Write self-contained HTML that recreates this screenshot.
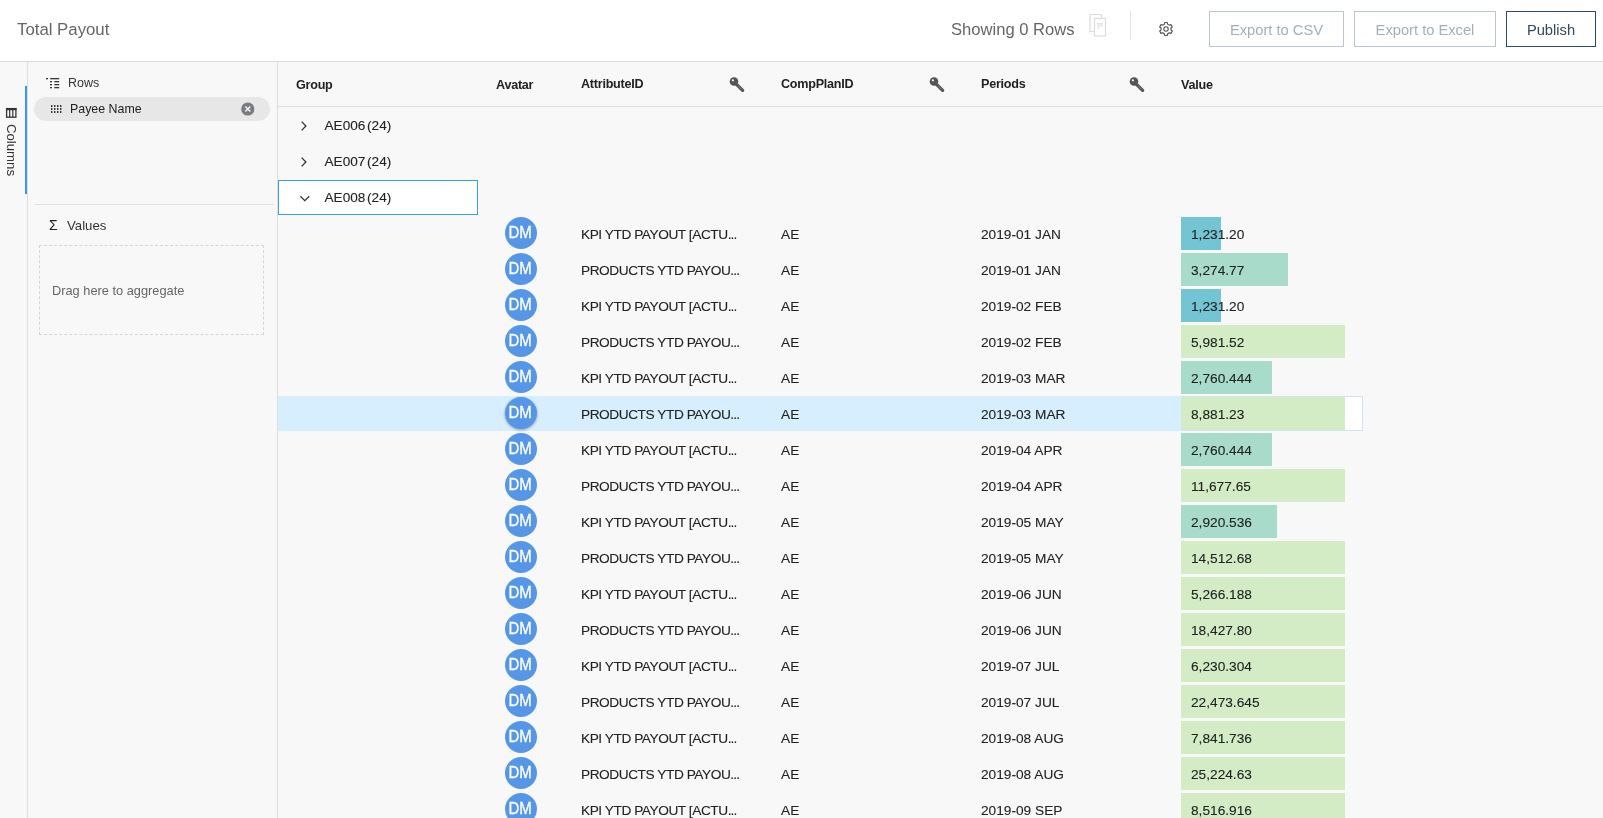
<!DOCTYPE html>
<html><head><meta charset="utf-8">
<style>
*{box-sizing:border-box;margin:0;padding:0}
html,body{width:1603px;height:818px;overflow:hidden;background:#fff;font-family:"Liberation Sans",sans-serif;color:#222}
.cell,.val,.gtext{-webkit-text-stroke:0.1px currentColor}
.abs{position:absolute}
#top{position:absolute;left:0;top:0;width:1603px;height:62px;background:#fff;border-bottom:1px solid #dcdcdc}
#title{left:17px;top:20px;font-size:16.8px;color:#666;white-space:nowrap}
#showing{left:951px;top:20px;font-size:16.6px;color:#666;white-space:nowrap}
.btn{position:absolute;top:11px;height:36px;border:1px solid #b9c6d2;color:#a3afbb;font-size:14.7px;text-align:center;line-height:34px;padding-top:1px;background:#fff;white-space:nowrap}
#strip{left:0;top:62px;width:28px;height:756px;background:#f8f8f8;border-right:1px solid #dedede}
#panel{left:28px;top:62px;width:250px;height:756px;background:#f8f8f8;border-right:1px solid #dedede}
#grid{left:278px;top:62px;width:1325px;height:756px;background:#f8f8f8;overflow:hidden}
#ghead{left:0;top:0;width:1325px;height:45px;border-bottom:1px solid #dedede}
.hl{position:absolute;font-size:12.6px;font-weight:bold;color:#222;white-space:nowrap;letter-spacing:-0.25px}
.key{position:absolute;top:14px}
.grow{position:absolute;left:0;width:1085px;height:36px}
.gtext{position:absolute;left:46.5px;top:0;line-height:36px;font-size:13.6px;word-spacing:-2px;white-space:nowrap;padding-top:1px}
.chev{position:absolute}
.focus{position:absolute;border:1px solid #3d9bf0;background:#fff}
.row{position:absolute;left:0;width:1085px;height:36px}
.row.sel::before{content:"";position:absolute;left:0;top:1px;width:903px;height:35px;background:#d7eefe}
.vfocus{position:absolute;left:903px;top:1px;width:182px;height:35px;border:1px solid #cfe3f7;border-left:0;background:#fff}
.cell{position:absolute;top:0;height:36px;font-size:13.7px;line-height:36px;white-space:nowrap;color:#222;padding-top:2px}
.cell.at{letter-spacing:-0.45px}
.el{letter-spacing:-0.9px}
.av{position:absolute;left:227px;top:2px;width:32px;height:32px;border-radius:50%;background:#5596e6;color:#fff;font-size:16px;text-align:center;line-height:32px}
.av b{display:inline-block;font-weight:normal;font-size:15.6px;position:relative;left:-0.5px;top:0px;transform:scaleX(0.96);-webkit-text-stroke:0.3px #fff}
.sel .av{box-shadow:0 1px 3px rgba(0,0,0,.35)}
.bar{position:absolute;left:903px;top:2px;height:33px}
.val{position:absolute;left:913px;top:0;height:36px;line-height:36px;font-size:13.7px;color:#222;padding-top:2px}
</style></head>
<body><div id="wrap" style="position:absolute;left:0;top:0;width:1603px;height:818px;will-change:transform">
<div id="top">
  <div id="title" class="abs">Total Payout</div>
  <div id="showing" class="abs">Showing 0 Rows</div>
  <svg class="abs" style="left:1088px;top:12px" width="20" height="26" viewBox="0 0 20 26">
    <path d="M2 2.5 h11.5 v4" fill="none" stroke="#dcdcdc" stroke-width="1.2"/>
    <path d="M2 2.5 v17 h4.5" fill="none" stroke="#dcdcdc" stroke-width="1.2"/>
    <rect x="6.5" y="6.5" width="11" height="17.5" fill="#fff" stroke="#dcdcdc" stroke-width="1.2"/>
    <rect x="9" y="11" width="6" height="1.6" fill="#e2e2e2"/>
    <rect x="9" y="13.2" width="6" height="1.2" fill="#e2e2e2"/>
    <rect x="9" y="15.2" width="2.5" height="1.2" fill="#e2e2e2"/>
  </svg>
  <div class="abs" style="left:1130px;top:11px;width:1px;height:29px;background:#e3e3e3"></div>
  <svg class="abs" style="left:1158px;top:21px" width="16" height="16" viewBox="0 0 24 24">
    <circle cx="12" cy="12" r="3.3" fill="none" stroke="#555" stroke-width="1.7"/>
    <path fill="none" stroke="#555" stroke-width="1.7" stroke-linejoin="round" d="M19.4 13.5c.05-.5.1-1 .1-1.5s-.05-1-.1-1.5l2.1-1.6-2-3.5-2.5 1a7.6 7.6 0 0 0-2.6-1.5L14 2.3h-4l-.4 2.6a7.6 7.6 0 0 0-2.6 1.5l-2.5-1-2 3.5 2.1 1.6c-.05.5-.1 1-.1 1.5s.05 1 .1 1.5l-2.1 1.6 2 3.5 2.5-1a7.6 7.6 0 0 0 2.6 1.5l.4 2.6h4l.4-2.6a7.6 7.6 0 0 0 2.6-1.5l2.5 1 2-3.5z"/>
  </svg>
  <div class="btn" style="left:1209px;width:135px">Export to CSV</div>
  <div class="btn" style="left:1354px;width:142px">Export to Excel</div>
  <div class="btn" style="left:1506px;width:90px;border-color:#2f4a63;color:#2f4a63;border-width:1.5px">Publish</div>
</div>
<div id="strip" class="abs">
  <div class="abs" style="left:25px;top:24px;width:2px;height:108px;background:#3d96ec"></div>
  <svg class="abs" style="left:5px;top:45px" width="13" height="12" viewBox="0 0 13 12"><rect x="1.6" y="1.6" width="9.3" height="8.6" fill="none" stroke="#333" stroke-width="1.3"/><rect x="1" y="1" width="10.5" height="2.2" fill="#333"/><path d="M4.7 2 v8 M7.8 2 v8" stroke="#333" stroke-width="1.2"/></svg>
  <div class="abs" style="left:18.5px;top:62px;transform:rotate(90deg);transform-origin:0 0;font-size:13.2px;color:#333;white-space:nowrap;line-height:15px">Columns</div>
</div>
<div id="panel" class="abs">
  <svg class="abs" style="left:17px;top:14px" width="16" height="14" viewBox="0 0 16 14"><g fill="#333"><rect x="1" y="2" width="2" height="1.3"/><rect x="5.2" y="2" width="9" height="1.3"/><rect x="5" y="5" width="2" height="1.3"/><rect x="9.3" y="5" width="4.9" height="1.3"/><rect x="5" y="8" width="2" height="1.3"/><rect x="9.3" y="8" width="4.9" height="1.3"/><rect x="5" y="11" width="2" height="1.3"/><rect x="9.3" y="11" width="4.9" height="1.3"/></g></svg>
  <div class="abs" style="left:40px;top:14px;font-size:12.5px;color:#333">Rows</div>
  <div class="abs" style="left:6px;top:35px;width:236px;height:24px;border-radius:12px;background:#e7e7e7"></div>
  <svg class="abs" style="left:22px;top:42px" width="13" height="10" viewBox="0 0 13 10"><g fill="#333"><rect x="1" y="1" width="1.4" height="2"/><rect x="4" y="1" width="1.4" height="2"/><rect x="7" y="1" width="1.4" height="2"/><rect x="10" y="1" width="1.4" height="2"/><rect x="1" y="4" width="1.4" height="2"/><rect x="4" y="4" width="1.4" height="2"/><rect x="7" y="4" width="1.4" height="2"/><rect x="10" y="4" width="1.4" height="2"/><rect x="1" y="7" width="1.4" height="2"/><rect x="4" y="7" width="1.4" height="2"/><rect x="7" y="7" width="1.4" height="2"/><rect x="10" y="7" width="1.4" height="2"/></g></svg>
  <div class="abs" style="left:42px;top:40px;font-size:12.4px;color:#222;white-space:nowrap">Payee Name</div>
  <svg class="abs" style="left:213px;top:40px" width="14" height="14" viewBox="0 0 14 14"><circle cx="6.8" cy="7" r="6.6" fill="#797c7f"/><path d="M4.3 4.5 L9.3 9.5 M9.3 4.5 L4.3 9.5" stroke="#f2f2f2" stroke-width="1.6"/></svg>
  <div class="abs" style="left:6px;top:142px;width:240px;height:1px;background:#d9e2ea"></div>
  <div class="abs" style="left:21px;top:155px;font-size:14px;color:#222">&Sigma;</div>
  <div class="abs" style="left:39px;top:156px;font-size:13.2px;color:#333">Values</div>
  <div class="abs" style="left:11px;top:183px;width:225px;height:90px;border:1px dashed #d6d6d6"></div>
  <div class="abs" style="left:24px;top:221px;font-size:12.8px;color:#666;white-space:nowrap">Drag here to aggregate</div>
</div>
<div id="grid" class="abs">
  <div id="ghead" class="abs">
    <div class="hl" style="left:18px;top:16px">Group</div>
    <div class="hl" style="left:218px;top:16px">Avatar</div>
    <div class="hl" style="left:303px;top:15px">AttributeID</div>
    <svg class="key" style="left:450px" width="18" height="18" viewBox="0 0 18 18"><circle cx="6" cy="5.5" r="4.3" fill="#555"/><circle cx="4.9" cy="4.3" r="1.1" fill="#f8f8f8"/><path d="M8 7.8 L14.6 14.4" stroke="#555" stroke-width="3.3" stroke-linecap="round"/><path d="M10.4 10.2 L13.9 13.7" stroke="#8a8a8a" stroke-width="0.8"/></svg>
    <div class="hl" style="left:503px;top:15px">CompPlanID</div>
    <svg class="key" style="left:650px" width="18" height="18" viewBox="0 0 18 18"><circle cx="6" cy="5.5" r="4.3" fill="#555"/><circle cx="4.9" cy="4.3" r="1.1" fill="#f8f8f8"/><path d="M8 7.8 L14.6 14.4" stroke="#555" stroke-width="3.3" stroke-linecap="round"/><path d="M10.4 10.2 L13.9 13.7" stroke="#8a8a8a" stroke-width="0.8"/></svg>
    <div class="hl" style="left:703px;top:15px">Periods</div>
    <svg class="key" style="left:850px" width="18" height="18" viewBox="0 0 18 18"><circle cx="6" cy="5.5" r="4.3" fill="#555"/><circle cx="4.9" cy="4.3" r="1.1" fill="#f8f8f8"/><path d="M8 7.8 L14.6 14.4" stroke="#555" stroke-width="3.3" stroke-linecap="round"/><path d="M10.4 10.2 L13.9 13.7" stroke="#8a8a8a" stroke-width="0.8"/></svg>
    <div class="hl" style="left:903px;top:16px">Value</div>
  </div>
<div class="grow" style="top:45px"><svg class="chev" width="10" height="12" viewBox="0 0 10 12" style="left:21px;top:12.5px"><path d="M2.6 1.6 L6.9 6 L2.6 10.4" fill="none" stroke="#333" stroke-width="1.3"/></svg><div class="gtext">AE006 (24)</div></div>
<div class="grow" style="top:81px"><svg class="chev" width="10" height="12" viewBox="0 0 10 12" style="left:21px;top:12.5px"><path d="M2.6 1.6 L6.9 6 L2.6 10.4" fill="none" stroke="#333" stroke-width="1.3"/></svg><div class="gtext">AE007 (24)</div></div>
<div class="grow" style="top:117px"><div class="focus" style="left:0;top:1px;width:200px;height:35px"></div><svg class="chev" width="12" height="10" viewBox="0 0 12 10" style="left:20.5px;top:14.5px"><path d="M1.4 2.2 L5.8 6.6 L10.2 2.2" fill="none" stroke="#333" stroke-width="1.3"/></svg><div class="gtext">AE008 (24)</div></div>
<div class="row" style="top:153px"><div class="av"><b>DM</b></div><div class="cell at" style="left:303px">KPI YTD PAYOUT [ACTU<span class=el>...</span></div><div class="cell" style="left:503px">AE</div><div class="cell" style="left:703px">2019-01 JAN</div><div class="bar" style="width:40px;background:#74c5d3"></div><div class="val">1,231.20</div></div>
<div class="row" style="top:189px"><div class="av"><b>DM</b></div><div class="cell at" style="left:303px">PRODUCTS YTD PAYOU<span class=el>...</span></div><div class="cell" style="left:503px">AE</div><div class="cell" style="left:703px">2019-01 JAN</div><div class="bar" style="width:107px;background:#a9dbca"></div><div class="val">3,274.77</div></div>
<div class="row" style="top:225px"><div class="av"><b>DM</b></div><div class="cell at" style="left:303px">KPI YTD PAYOUT [ACTU<span class=el>...</span></div><div class="cell" style="left:503px">AE</div><div class="cell" style="left:703px">2019-02 FEB</div><div class="bar" style="width:40px;background:#74c5d3"></div><div class="val">1,231.20</div></div>
<div class="row" style="top:261px"><div class="av"><b>DM</b></div><div class="cell at" style="left:303px">PRODUCTS YTD PAYOU<span class=el>...</span></div><div class="cell" style="left:503px">AE</div><div class="cell" style="left:703px">2019-02 FEB</div><div class="bar" style="width:164px;background:#d3ecc6"></div><div class="val">5,981.52</div></div>
<div class="row" style="top:297px"><div class="av"><b>DM</b></div><div class="cell at" style="left:303px">KPI YTD PAYOUT [ACTU<span class=el>...</span></div><div class="cell" style="left:503px">AE</div><div class="cell" style="left:703px">2019-03 MAR</div><div class="bar" style="width:91px;background:#a9dbca"></div><div class="val">2,760.444</div></div>
<div class="row sel" style="top:333px"><div class="vfocus"></div><div class="av"><b>DM</b></div><div class="cell at" style="left:303px">PRODUCTS YTD PAYOU<span class=el>...</span></div><div class="cell" style="left:503px">AE</div><div class="cell" style="left:703px">2019-03 MAR</div><div class="bar" style="width:164px;background:#d3ecc6"></div><div class="val">8,881.23</div></div>
<div class="row" style="top:369px"><div class="av"><b>DM</b></div><div class="cell at" style="left:303px">KPI YTD PAYOUT [ACTU<span class=el>...</span></div><div class="cell" style="left:503px">AE</div><div class="cell" style="left:703px">2019-04 APR</div><div class="bar" style="width:91px;background:#a9dbca"></div><div class="val">2,760.444</div></div>
<div class="row" style="top:405px"><div class="av"><b>DM</b></div><div class="cell at" style="left:303px">PRODUCTS YTD PAYOU<span class=el>...</span></div><div class="cell" style="left:503px">AE</div><div class="cell" style="left:703px">2019-04 APR</div><div class="bar" style="width:164px;background:#d3ecc6"></div><div class="val">11,677.65</div></div>
<div class="row" style="top:441px"><div class="av"><b>DM</b></div><div class="cell at" style="left:303px">KPI YTD PAYOUT [ACTU<span class=el>...</span></div><div class="cell" style="left:503px">AE</div><div class="cell" style="left:703px">2019-05 MAY</div><div class="bar" style="width:96px;background:#a9dbca"></div><div class="val">2,920.536</div></div>
<div class="row" style="top:477px"><div class="av"><b>DM</b></div><div class="cell at" style="left:303px">PRODUCTS YTD PAYOU<span class=el>...</span></div><div class="cell" style="left:503px">AE</div><div class="cell" style="left:703px">2019-05 MAY</div><div class="bar" style="width:164px;background:#d3ecc6"></div><div class="val">14,512.68</div></div>
<div class="row" style="top:513px"><div class="av"><b>DM</b></div><div class="cell at" style="left:303px">KPI YTD PAYOUT [ACTU<span class=el>...</span></div><div class="cell" style="left:503px">AE</div><div class="cell" style="left:703px">2019-06 JUN</div><div class="bar" style="width:164px;background:#d3ecc6"></div><div class="val">5,266.188</div></div>
<div class="row" style="top:549px"><div class="av"><b>DM</b></div><div class="cell at" style="left:303px">PRODUCTS YTD PAYOU<span class=el>...</span></div><div class="cell" style="left:503px">AE</div><div class="cell" style="left:703px">2019-06 JUN</div><div class="bar" style="width:164px;background:#d3ecc6"></div><div class="val">18,427.80</div></div>
<div class="row" style="top:585px"><div class="av"><b>DM</b></div><div class="cell at" style="left:303px">KPI YTD PAYOUT [ACTU<span class=el>...</span></div><div class="cell" style="left:503px">AE</div><div class="cell" style="left:703px">2019-07 JUL</div><div class="bar" style="width:164px;background:#d3ecc6"></div><div class="val">6,230.304</div></div>
<div class="row" style="top:621px"><div class="av"><b>DM</b></div><div class="cell at" style="left:303px">PRODUCTS YTD PAYOU<span class=el>...</span></div><div class="cell" style="left:503px">AE</div><div class="cell" style="left:703px">2019-07 JUL</div><div class="bar" style="width:164px;background:#d3ecc6"></div><div class="val">22,473.645</div></div>
<div class="row" style="top:657px"><div class="av"><b>DM</b></div><div class="cell at" style="left:303px">KPI YTD PAYOUT [ACTU<span class=el>...</span></div><div class="cell" style="left:503px">AE</div><div class="cell" style="left:703px">2019-08 AUG</div><div class="bar" style="width:164px;background:#d3ecc6"></div><div class="val">7,841.736</div></div>
<div class="row" style="top:693px"><div class="av"><b>DM</b></div><div class="cell at" style="left:303px">PRODUCTS YTD PAYOU<span class=el>...</span></div><div class="cell" style="left:503px">AE</div><div class="cell" style="left:703px">2019-08 AUG</div><div class="bar" style="width:164px;background:#d3ecc6"></div><div class="val">25,224.63</div></div>
<div class="row" style="top:729px"><div class="av"><b>DM</b></div><div class="cell at" style="left:303px">KPI YTD PAYOUT [ACTU<span class=el>...</span></div><div class="cell" style="left:503px">AE</div><div class="cell" style="left:703px">2019-09 SEP</div><div class="bar" style="width:164px;background:#d3ecc6"></div><div class="val">8,516.916</div></div></div>
</div></body></html>
